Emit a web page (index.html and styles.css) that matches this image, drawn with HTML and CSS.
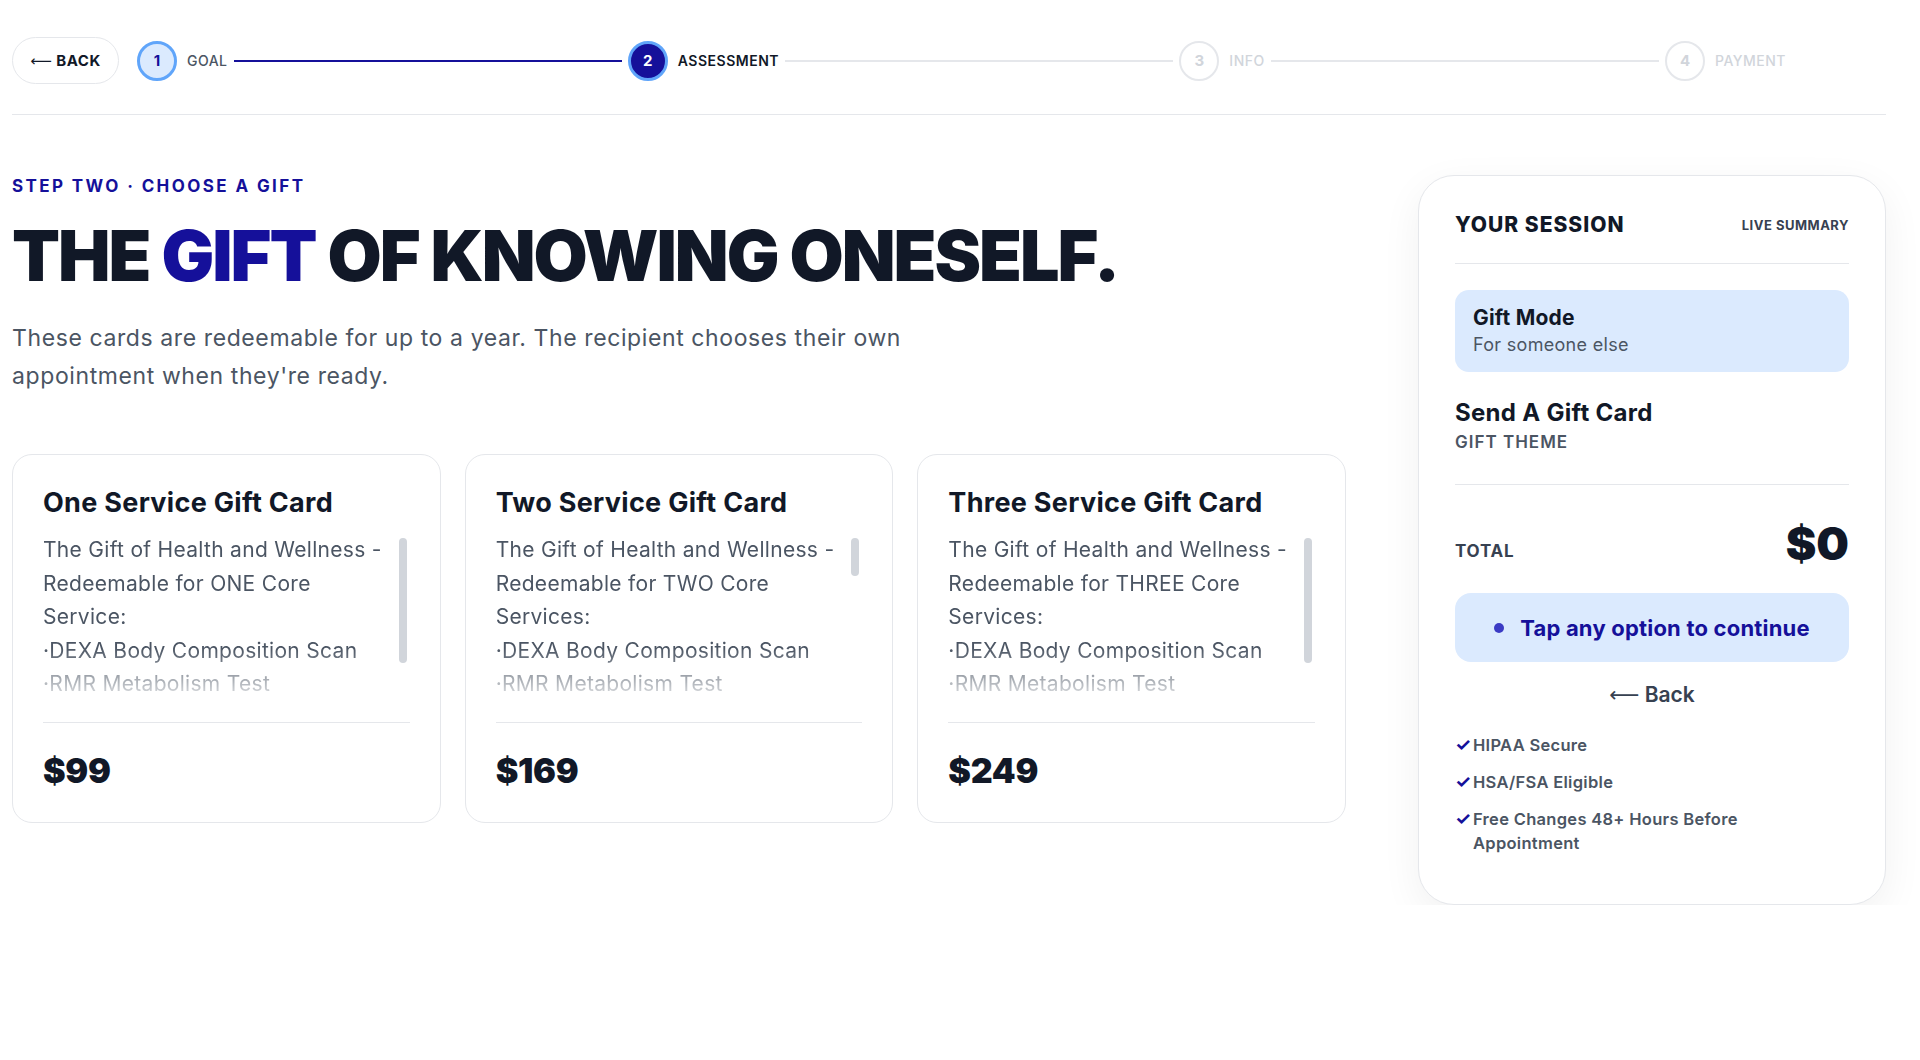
FILE: index.html
```html
<!DOCTYPE html>
<html lang="en">
<head>
    <meta charset="UTF-8">
    <meta name="viewport" content="width=device-width, initial-scale=1.0">
    <title>Choose a Gift</title>
    <link rel="stylesheet" href="styles.css">
</head>
<body>
<div class="page">

    <!-- Barra superior con pasos -->
    <header class="topbar">
        <button type="button" class="back-btn"><span class="arrow">&#10229;</span> BACK</button>
        <div class="stepper">
            <div class="step done"><span class="dot">1</span><span class="step-label">GOAL</span></div>
            <div class="line done"></div>
            <div class="step current"><span class="dot">2</span><span class="step-label">ASSESSMENT</span></div>
            <div class="line"></div>
            <div class="step"><span class="dot">3</span><span class="step-label">INFO</span></div>
            <div class="line"></div>
            <div class="step"><span class="dot">4</span><span class="step-label">PAYMENT</span></div>
        </div>
    </header>

    <div class="main">

        <!-- Columna principal -->
        <section class="content">
            <p class="eyebrow">STEP TWO &middot; CHOOSE A GIFT</p>
            <h1 class="title">THE <span class="accent">GIFT</span> OF KNOWING ONESELF.</h1>
            <p class="lead">These cards are redeemable for up to a year. The recipient chooses their own appointment when they're ready.</p>

            <div class="cards">
                <div class="card">
                    <h2 class="card-title">One Service Gift Card</h2>
                    <div class="desc-wrap">
                        <div class="card-desc">
                            The Gift of Health and Wellness - Redeemable for ONE Core Service:<br>
                            &middot;DEXA Body Composition Scan<br>
                            &middot;RMR Metabolism Test
                        </div>
                        <span class="thumb" style="height: 125px;"></span>
                    </div>
                    <div class="card-price">$99</div>
                </div>

                <div class="card">
                    <h2 class="card-title">Two Service Gift Card</h2>
                    <div class="desc-wrap">
                        <div class="card-desc">
                            The Gift of Health and Wellness - Redeemable for TWO Core Services:<br>
                            &middot;DEXA Body Composition Scan<br>
                            &middot;RMR Metabolism Test
                        </div>
                        <span class="thumb" style="height: 38px;"></span>
                    </div>
                    <div class="card-price">$169</div>
                </div>

                <div class="card">
                    <h2 class="card-title">Three Service Gift Card</h2>
                    <div class="desc-wrap">
                        <div class="card-desc">
                            The Gift of Health and Wellness - Redeemable for THREE Core Services:<br>
                            &middot;DEXA Body Composition Scan<br>
                            &middot;RMR Metabolism Test
                        </div>
                        <span class="thumb" style="height: 125px;"></span>
                    </div>
                    <div class="card-price">$249</div>
                </div>
            </div>
        </section>

        <!-- Resumen lateral -->
        <aside class="summary">
            <div class="summary-head">
                <span class="summary-title">YOUR SESSION</span>
                <span class="summary-tag">LIVE SUMMARY</span>
            </div>

            <div class="mode-box">
                <div class="mode-title">Gift Mode</div>
                <div class="mode-sub">For someone else</div>
            </div>

            <div class="item">
                <div class="item-title">Send A Gift Card</div>
                <div class="item-sub">GIFT THEME</div>
            </div>

            <div class="total">
                <span class="total-label">TOTAL</span>
                <span class="total-value">$0</span>
            </div>

            <div class="cta"><span class="cta-dot"></span>Tap any option to continue</div>

            <a class="back-link" href="#"><span class="arrow">&#10229;</span> Back</a>

            <ul class="perks">
                <li><span class="check">&#10003;</span>HIPAA Secure</li>
                <li><span class="check">&#10003;</span>HSA/FSA Eligible</li>
                <li><span class="check">&#10003;</span>Free Changes 48+ Hours Before Appointment</li>
            </ul>
        </aside>

    </div>
</div>
</body>
</html>
```

FILE: styles.css
```css
body {
    margin: 0;
    background-color: #ffffff;
    font-family: Inter, "Noto Sans", sans-serif;
    color: #111827;
}

.page {
    padding: 0 34px 0 12px;
}

.arrow {
    font-family: "DejaVu Sans", sans-serif;
    font-weight: 400;
}

/* Barra superior */
.topbar {
    display: flex;
    align-items: center;
    padding: 37px 0 30px;
    border-bottom: 1px solid #e5e7eb;
}

.back-btn {
    width: 107px;
    height: 47px;
    border: 1px solid #e5e7eb;
    border-radius: 24px;
    background-color: white;
    font-family: inherit;
    font-size: 15px;
    font-weight: 700;
    letter-spacing: 0.5px;
    color: #111827;
    cursor: pointer;
}

.stepper {
    flex-grow: 1;
    display: flex;
    align-items: center;
    margin-left: 18px;
    padding-right: 100px;
}

.step {
    display: flex;
    align-items: center;
}

.dot {
    width: 36px;
    height: 36px;
    border: 2px solid #e5e7eb;
    border-radius: 50%;
    display: flex;
    align-items: center;
    justify-content: center;
    font-size: 15px;
    font-weight: 700;
    color: #d1d5db;
}

.step-label {
    margin-left: 10px;
    font-size: 14px;
    font-weight: 500;
    letter-spacing: 0.5px;
    color: #d1d5db;
}

.step.done .dot {
    background-color: #dbeafe;
    border: 3px solid #60a5fa;
    width: 34px;
    height: 34px;
    color: #15109a;
}

.step.done .step-label {
    color: #4b5563;
}

.step.current .dot {
    background-color: #15109a;
    border: 3px solid #60a5fa;
    width: 34px;
    height: 34px;
    color: white;
}

.step.current .step-label {
    color: #111827;
    font-weight: 600;
}

.line {
    flex-grow: 1;
    height: 2px;
    background-color: #e5e7eb;
    margin: 0 6px;
}

.line.done {
    background-color: #15109a;
}

/* Contenido */
.main {
    display: flex;
    gap: 72px;
    padding-top: 60px;
    align-items: flex-start;
}

.content {
    flex-grow: 1;
}

.eyebrow {
    margin: 0;
    font-size: 17px;
    line-height: 22px;
    font-weight: 700;
    letter-spacing: 2.4px;
    color: #15109a;
}

.title {
    margin: 19px 0 0;
    font-size: 70px;
    line-height: 79px;
    font-weight: 900;
    letter-spacing: -2px;
    color: #111827;
}

.accent {
    color: #15109a;
}

.lead {
    margin: 24px 0 0;
    max-width: 960px;
    font-size: 23px;
    line-height: 38px;
    font-weight: 400;
    letter-spacing: 0.6px;
    color: #4b5563;
}

.cards {
    display: grid;
    grid-template-columns: repeat(3, 1fr);
    gap: 24px;
    margin-top: 59px;
}

.card {
    border: 1px solid #e5e7eb;
    border-radius: 20px;
    padding: 31px 30px 30px;
    background-color: white;
}

.card-title {
    margin: 0;
    font-size: 27px;
    line-height: 34px;
    font-weight: 700;
    letter-spacing: 0.3px;
    color: #111827;
}

.desc-wrap {
    position: relative;
    margin-top: 13px;
}

.card-desc {
    height: 169px;
    overflow: hidden;
    padding-right: 22px;
    font-size: 21px;
    line-height: 33.5px;
    letter-spacing: 0.3px;
    color: #4b5563;
    -webkit-mask-image: linear-gradient(to bottom, black 68%, rgba(0, 0, 0, 0.1) 100%);
    mask-image: linear-gradient(to bottom, black 68%, rgba(0, 0, 0, 0.1) 100%);
}

/* barra de scroll dibujada */
.thumb {
    position: absolute;
    top: 5px;
    right: 3px;
    width: 8px;
    border-radius: 4px;
    background-color: #d1d5db;
}

.card-price {
    margin-top: 20px;
    padding-top: 26px;
    border-top: 1px solid #e5e7eb;
    font-size: 34px;
    line-height: 43px;
    font-weight: 900;
    letter-spacing: -0.3px;
    color: #111827;
}

/* Resumen lateral */
.summary {
    width: 394px;
    flex-shrink: 0;
    border: 1px solid #e5e7eb;
    border-radius: 36px;
    padding: 36px 36px 49px;
    background-color: white;
    box-shadow: 0 12px 40px rgba(0, 0, 0, 0.06);
}

.summary-head {
    display: flex;
    justify-content: space-between;
    align-items: center;
    padding-bottom: 25px;
    border-bottom: 1px solid #e5e7eb;
}

.summary-title {
    font-size: 21px;
    line-height: 26px;
    font-weight: 800;
    letter-spacing: 1px;
}

.summary-tag {
    font-size: 13px;
    font-weight: 700;
    letter-spacing: 0.5px;
    color: #374151;
}

.mode-box {
    margin-top: 26px;
    background-color: #dbeafe;
    border-radius: 14px;
    padding: 14px 18px 15px;
}

.mode-title {
    font-size: 21px;
    line-height: 27px;
    font-weight: 700;
    letter-spacing: 0.2px;
}

.mode-sub {
    margin-top: 2px;
    font-size: 18px;
    line-height: 24px;
    letter-spacing: 0.3px;
    color: #4b5563;
}

.item {
    padding: 26px 0 30px;
    border-bottom: 1px solid #e5e7eb;
}

.item-title {
    font-size: 24px;
    line-height: 30px;
    font-weight: 700;
    letter-spacing: 0.3px;
}

.item-sub {
    margin-top: 2px;
    font-size: 17px;
    line-height: 24px;
    font-weight: 600;
    letter-spacing: 1px;
    color: #4b5563;
}

.total {
    display: flex;
    justify-content: space-between;
    align-items: center;
    padding-top: 30px;
}

.total-label {
    font-size: 17px;
    font-weight: 700;
    letter-spacing: 0.8px;
    color: #374151;
    margin-top: 16px;
}

.total-value {
    font-size: 46px;
    line-height: 56px;
    font-weight: 900;
}

.cta {
    margin-top: 22px;
    height: 69px;
    border-radius: 16px;
    background-color: #dbeafe;
    display: flex;
    align-items: center;
    justify-content: center;
    font-size: 22px;
    font-weight: 700;
    letter-spacing: 0.2px;
    color: #15109a;
}

.cta-dot {
    width: 10px;
    height: 10px;
    border-radius: 50%;
    background-color: #3b3bc4;
    margin-right: 16px;
}

.back-link {
    display: block;
    margin-top: 20px;
    text-align: center;
    text-decoration: none;
    font-size: 21px;
    line-height: 26px;
    font-weight: 600;
    color: #374151;
}

.perks {
    list-style: none;
    margin: 25px 0 0;
    padding: 0;
}

.perks li {
    display: flex;
    max-width: 300px;
    font-size: 16.5px;
    line-height: 24px;
    font-weight: 600;
    letter-spacing: 0.3px;
    color: #4b5563;
    margin-bottom: 13px;
}

.perks li:last-child {
    margin-bottom: 0;
}

.check {
    width: 18px;
    flex-shrink: 0;
    font-size: 18px;
    color: #15109a;
    font-weight: 700;
}
```
